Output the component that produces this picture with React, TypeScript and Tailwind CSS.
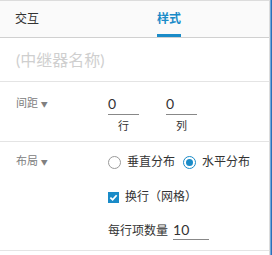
import React from 'react'

const font = { fontFamily: '"Lato", "Noto Sans CJK SC", sans-serif' }

function Radio({ checked, label }: { checked?: boolean; label: string }) {
  return (
    <div className="flex items-center gap-[6px]">
      <span
        className={`flex h-[13px] w-[13px] items-center justify-center rounded-full border ${
          checked ? 'border-[#1a8bc8]' : 'border-[#9a9a9a]'
        }`}
      >
        {checked && <span className="h-[7px] w-[7px] rounded-full bg-[#1a8bc8]" />}
      </span>
      <span className="text-[12px] text-[#333]">{label}</span>
    </div>
  )
}

export default function App() {
  return (
    <div className="flex h-[255px] w-[272px] bg-white" style={font}>
      <div className="flex flex-1 flex-col border-t border-r border-[#dcdcdc]">
        {/* Tabs */}
        <div className="flex h-[37px] items-stretch border-b border-[#d0d0d0] bg-[#fafafa]">
          <div className="flex w-[142px] items-center pl-[15px] text-[12px] text-[#333]">交互</div>
          <div className="relative flex items-center px-[15px] text-[12px] font-semibold text-[#1a8bc8]">
            样式
            <span className="absolute bottom-0 left-[15px] right-[15px] h-[3px] bg-[#1a8bc8]" />
          </div>
        </div>

        {/* Name */}
        <div className="flex h-[44px] items-center border-b border-[#e4e4e4] pl-[16px] text-[16px] text-[#cfcfcf]">
          (中继器名称)
        </div>

        {/* Spacing */}
        <div className="flex h-[60px] border-b border-[#e4e4e4] pt-[13px]">
          <div className="w-[92px] pl-[16px] text-[11px] text-[#808080]">
            间距 <span className="text-[7px]">▼</span>
          </div>
          <div className="flex gap-[27px] pl-[16px]">
            <div className="flex w-[31px] flex-col items-center">
              <div className="h-[20px] w-full border-b border-[#888] text-[14px] leading-[18px] text-[#333]">0</div>
              <div className="mt-[3px] text-[11px] text-[#333]">行</div>
            </div>
            <div className="flex w-[31px] flex-col items-center">
              <div className="h-[20px] w-full border-b border-[#888] text-[14px] leading-[18px] text-[#333]">0</div>
              <div className="mt-[3px] text-[11px] text-[#333]">列</div>
            </div>
          </div>
        </div>

        {/* Layout */}
        <div className="flex h-[109px] border-b border-[#e4e4e4] pt-[11px]">
          <div className="w-[92px] pl-[16px] text-[11px] text-[#808080]">
            布局 <span className="text-[7px]">▼</span>
          </div>
          <div className="flex flex-col pl-[16px]">
            <div className="flex items-center gap-[8px]">
              <Radio label="垂直分布" />
              <Radio checked label="水平分布" />
            </div>
            <div className="mt-[17px] flex items-center gap-[6px]">
              <span className="flex h-[11px] w-[11px] items-center justify-center bg-[#1a8bc8]">
                <svg width="9" height="9" viewBox="0 0 10 10">
                  <path d="M1.5 5.2 L4 7.5 L8.5 2.5" fill="none" stroke="white" strokeWidth="2" />
                </svg>
              </span>
              <span className="text-[12px] text-[#333]">换行（网格）</span>
            </div>
            <div className="mt-[15px] flex items-end gap-[5px]">
              <span className="text-[12px] text-[#333]">每行项数量</span>
              <span className="w-[36px] border-b border-[#888] text-[14px] leading-[18px] text-[#333]">10</span>
            </div>
          </div>
        </div>
      </div>
      <div className="w-[1px] bg-[#6ea8dc]" />
      <div className="w-[1px] bg-[#2d6fb7]" />
    </div>
  )
}
